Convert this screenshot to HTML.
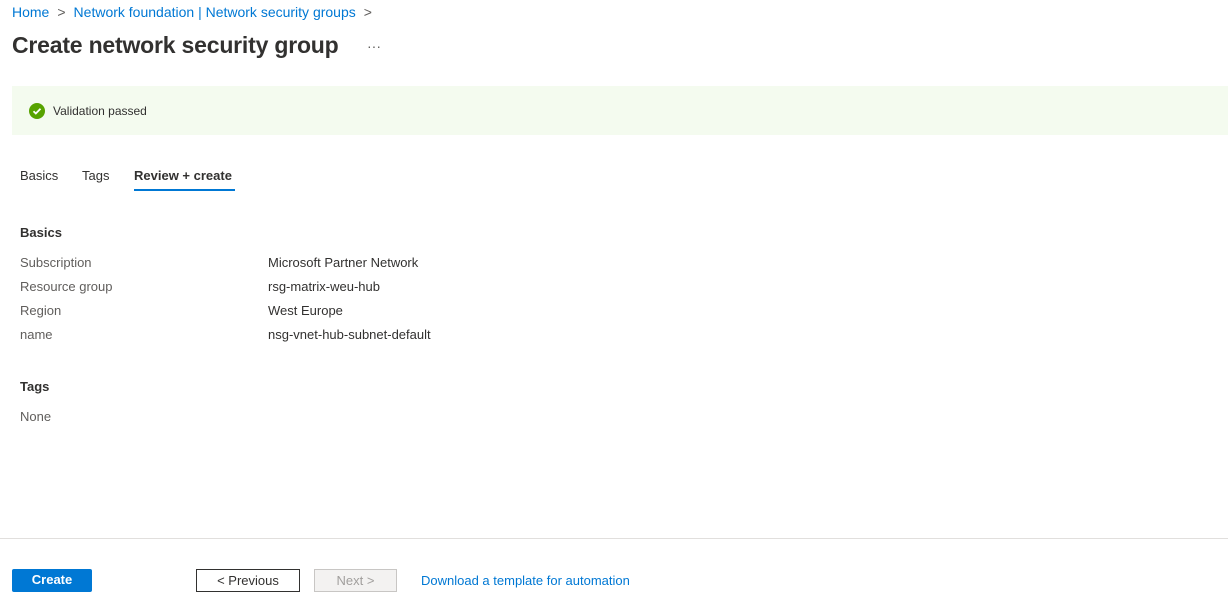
<!DOCTYPE html>
<html><head><style>
body{margin:0;width:1228px;height:609px;background:#fff;font-family:"Liberation Sans",sans-serif;color:#323130;position:relative;overflow:hidden}
.a{position:absolute;white-space:nowrap}
.bc{font-size:14px;color:#0078d4;top:4px;left:12px}
.bc span{color:#605e5c;margin:0 8px}
h1{position:absolute;margin:0;left:12px;top:32px;font-size:23px;font-weight:600;color:#323130;letter-spacing:-0.2px}
.banner{position:absolute;left:12px;top:86px;width:1216px;height:49px;background:#f4fbef}
.s{font-size:13px}
.l{font-size:13px;color:#605e5c}
.h{font-size:13px;font-weight:bold}
.btn{position:absolute;top:569px;height:23px;box-sizing:border-box;font-size:13px;text-align:center;line-height:22px}
</style></head><body>
<div class="a bc">Home<span>&gt;</span>Network foundation | Network security groups<span>&gt;</span></div>
<h1>Create network security group</h1>
<div class="a" style="left:367px;top:38px;font-size:14px;color:#605e5c">···</div>
<div class="banner"></div>
<svg class="a" style="left:29px;top:103px" width="16" height="16" viewBox="0 0 16 16"><circle cx="8" cy="8" r="8" fill="#57a300"/><path d="M4.5 8.2l2.3 2.3 4.7-4.8" stroke="#fff" stroke-width="1.8" fill="none"/></svg>
<div class="a" style="left:53px;top:104px;font-size:12px">Validation passed</div>
<div class="a s" style="left:20px;top:168px">Basics</div>
<div class="a s" style="left:82px;top:168px">Tags</div>
<div class="a s" style="left:134px;top:168px;font-weight:600">Review + create</div>
<div class="a" style="left:134px;top:189px;width:101px;height:2px;background:#0078d4"></div>
<div class="a h" style="left:20px;top:225px">Basics</div>
<div class="a l" style="left:20px;top:255px">Subscription</div><div class="a s" style="left:268px;top:255px">Microsoft Partner Network</div>
<div class="a l" style="left:20px;top:279px">Resource group</div><div class="a s" style="left:268px;top:279px">rsg-matrix-weu-hub</div>
<div class="a l" style="left:20px;top:303px">Region</div><div class="a s" style="left:268px;top:303px">West Europe</div>
<div class="a l" style="left:20px;top:327px">name</div><div class="a s" style="left:268px;top:327px">nsg-vnet-hub-subnet-default</div>
<div class="a h" style="left:20px;top:379px">Tags</div>
<div class="a l" style="left:20px;top:409px">None</div>
<div class="a" style="left:0;top:538px;width:1228px;height:1px;background:#e1dfdd"></div>
<div class="btn" style="left:12px;width:80px;background:#0078d4;color:#fff;font-weight:600;border-radius:2px">Create</div>
<div class="btn" style="left:196px;width:104px;border:1px solid #323130;color:#323130">&lt; Previous</div>
<div class="btn" style="left:314px;width:83px;border:1px solid #c8c6c4;background:#f3f2f1;color:#a19f9d">Next &gt;</div>
<div class="a s" style="left:421px;top:573px;color:#0078d4">Download a template for automation</div>
</body></html>
